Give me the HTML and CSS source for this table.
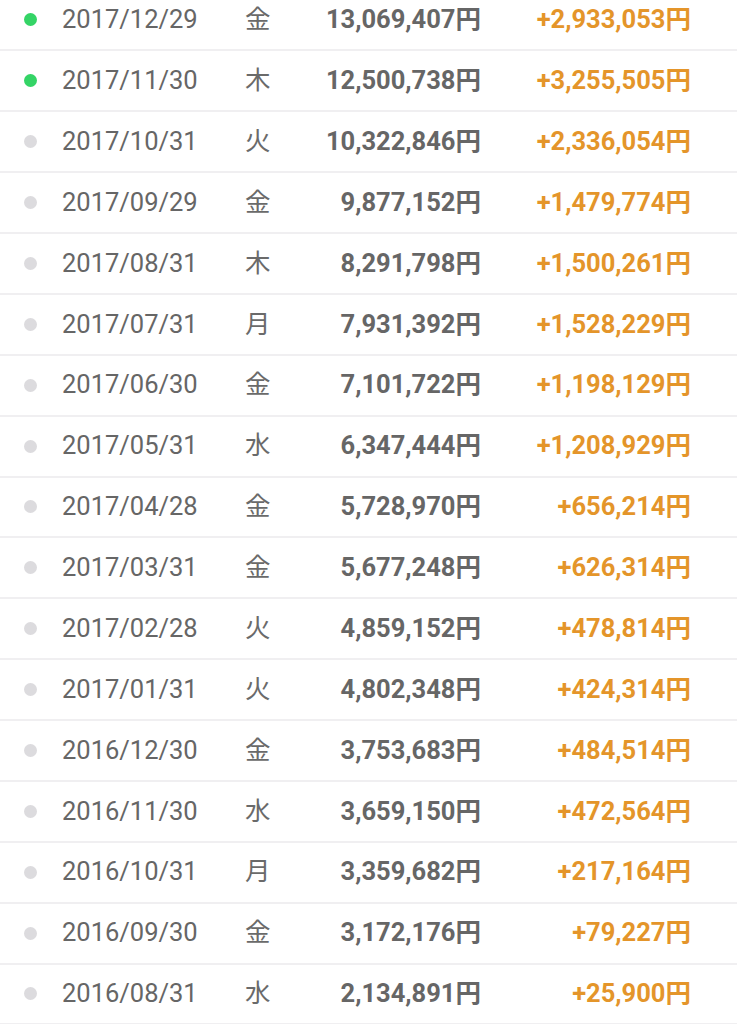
FILE: index.html
```html
<!DOCTYPE html>
<html lang="ja">
<head>
<meta charset="utf-8">
<link rel="stylesheet" href="styles.css">
</head>
<body>
<ul class="list">
  <li class="row"><span class="dot on"></span><span class="date">2017/12/29</span><span class="wd">金</span><span class="amt">13,069,407円</span><span class="diff">+2,933,053円</span></li>
  <li class="row"><span class="dot on"></span><span class="date">2017/11/30</span><span class="wd">木</span><span class="amt">12,500,738円</span><span class="diff">+3,255,505円</span></li>
  <li class="row"><span class="dot"></span><span class="date">2017/10/31</span><span class="wd">火</span><span class="amt">10,322,846円</span><span class="diff">+2,336,054円</span></li>
  <li class="row"><span class="dot"></span><span class="date">2017/09/29</span><span class="wd">金</span><span class="amt">9,877,152円</span><span class="diff">+1,479,774円</span></li>
  <li class="row"><span class="dot"></span><span class="date">2017/08/31</span><span class="wd">木</span><span class="amt">8,291,798円</span><span class="diff">+1,500,261円</span></li>
  <li class="row"><span class="dot"></span><span class="date">2017/07/31</span><span class="wd">月</span><span class="amt">7,931,392円</span><span class="diff">+1,528,229円</span></li>
  <li class="row"><span class="dot"></span><span class="date">2017/06/30</span><span class="wd">金</span><span class="amt">7,101,722円</span><span class="diff">+1,198,129円</span></li>
  <li class="row"><span class="dot"></span><span class="date">2017/05/31</span><span class="wd">水</span><span class="amt">6,347,444円</span><span class="diff">+1,208,929円</span></li>
  <li class="row"><span class="dot"></span><span class="date">2017/04/28</span><span class="wd">金</span><span class="amt">5,728,970円</span><span class="diff">+656,214円</span></li>
  <li class="row"><span class="dot"></span><span class="date">2017/03/31</span><span class="wd">金</span><span class="amt">5,677,248円</span><span class="diff">+626,314円</span></li>
  <li class="row"><span class="dot"></span><span class="date">2017/02/28</span><span class="wd">火</span><span class="amt">4,859,152円</span><span class="diff">+478,814円</span></li>
  <li class="row"><span class="dot"></span><span class="date">2017/01/31</span><span class="wd">火</span><span class="amt">4,802,348円</span><span class="diff">+424,314円</span></li>
  <li class="row"><span class="dot"></span><span class="date">2016/12/30</span><span class="wd">金</span><span class="amt">3,753,683円</span><span class="diff">+484,514円</span></li>
  <li class="row"><span class="dot"></span><span class="date">2016/11/30</span><span class="wd">水</span><span class="amt">3,659,150円</span><span class="diff">+472,564円</span></li>
  <li class="row"><span class="dot"></span><span class="date">2016/10/31</span><span class="wd">月</span><span class="amt">3,359,682円</span><span class="diff">+217,164円</span></li>
  <li class="row"><span class="dot"></span><span class="date">2016/09/30</span><span class="wd">金</span><span class="amt">3,172,176円</span><span class="diff">+79,227円</span></li>
  <li class="row"><span class="dot"></span><span class="date">2016/08/31</span><span class="wd">水</span><span class="amt">2,134,891円</span><span class="diff">+25,900円</span></li>
</ul>
</body>
</html>
```

FILE: styles.css
```css
html, body {
  margin: 0;
  padding: 0;
  background: #fff;
  overflow: hidden;
}
body {
  font-family: Roboto, "Noto Sans CJK JP", sans-serif;
  color: #666;
}
.list {
  list-style: none;
  margin: -9.5px 0 0 0;
  padding: 0;
}
.row {
  box-sizing: border-box;
  height: 60.875px;
  display: flex;
  align-items: center;
  border-bottom: 2px solid #f0eff1;
  font-size: 25.5px;
  line-height: 1;
}
.row > span {
  flex: none;
  line-height: 1;
}
.dot {
  width: 13px;
  height: 13px;
  border-radius: 50%;
  background: #dcdbde;
  margin-left: 24px;
}
.dot.on {
  background: #34d466;
}
.date {
  margin-left: 25px;
  width: 183px;
}
.wd {
  width: 30px;
  color: #6a6a6a;
}
.amt {
  width: 206px;
  text-align: right;
  font-weight: 700;
}
.diff {
  width: 210px;
  text-align: right;
  font-weight: 700;
  color: #e4952a;
}
```
